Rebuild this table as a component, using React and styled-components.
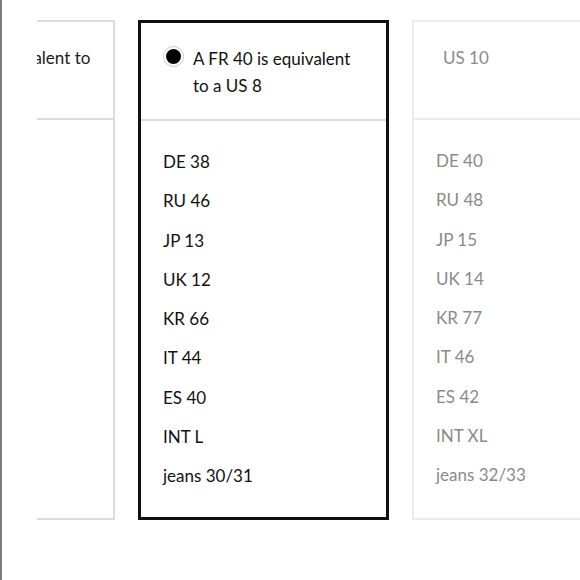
import React from 'react';
import styled, { createGlobalStyle, css } from 'styled-components';

const GlobalStyle = createGlobalStyle`
  html, body {
    margin: 0;
    padding: 0;
    background: #fff;
  }
  body {
    font-family: Lato, 'Open Sans', 'Liberation Sans', sans-serif;
    -webkit-font-smoothing: antialiased;
  }
`;

const Page = styled.div`
  display: flex;
  height: 580px;
  border-left: 2px solid #7c7c7c;
  box-sizing: border-box;
`;

const Viewport = styled.div`
  flex: 1;
  margin-left: 35px;
  padding-top: 20px;
  overflow: hidden;
`;

const Track = styled.div`
  display: flex;
  gap: 23px;
  margin-left: -173px;
`;

const Card = styled.div`
  flex-shrink: 0;
  width: 251px;
  height: 500px;
  box-sizing: border-box;
  display: flex;
  flex-direction: column;
  border: 2px solid ${(p) => (p.$dim ? '#ececec' : '#dcdcdc')};
  color: ${(p) => (p.$dim ? '#8a8a8a' : '#1a1a1a')};

  ${(p) =>
    p.$selected &&
    css`
      border: 3px solid #111;
      color: #111;
    `}
`;

const Header = styled.div`
  height: 98px;
  box-sizing: border-box;
  display: flex;
  align-items: flex-start;
  gap: 9px;
  padding: 22px 20px 0 ${(p) => p.$indent}px;
  border-bottom: 2px solid ${(p) => (p.$dim ? '#ececec' : '#dcdcdc')};
  font-size: 17px;
  line-height: 27px;
`;

const Radio = styled.span`
  flex-shrink: 0;
  width: 21px;
  height: 21px;
  margin-top: 1px;
  box-sizing: border-box;
  border: 1px solid #c8c8c8;
  border-radius: 50%;
  display: flex;
  align-items: center;
  justify-content: center;

  &::after {
    content: '';
    width: 15px;
    height: 15px;
    border-radius: 50%;
    background: #000;
  }
`;

const List = styled.ul`
  list-style: none;
  margin: 0;
  padding: 21px 0 0 ${(p) => p.$indent}px;
  font-size: 17px;
  line-height: 39.3px;
`;

const cards = [
  {
    label: 'A FR 38 is equivalent to a US 6',
    headIndent: 47,
    listIndent: 22,
    sizes: [],
  },
  {
    label: 'A FR 40 is equivalent to a US 8',
    selected: true,
    headIndent: 22,
    listIndent: 22,
    sizes: ['DE 38', 'RU 46', 'JP 13', 'UK 12', 'KR 66', 'IT 44', 'ES 40', 'INT L', 'jeans 30/31'],
  },
  {
    label: 'US 10',
    dim: true,
    headIndent: 29,
    listIndent: 22,
    sizes: ['DE 40', 'RU 48', 'JP 15', 'UK 14', 'KR 77', 'IT 46', 'ES 42', 'INT XL', 'jeans 32/33'],
  },
];

export default function App() {
  return (
    <>
      <GlobalStyle />
      <Page>
        <Viewport>
          <Track>
            {cards.map((c) => (
              <Card key={c.label} $selected={c.selected} $dim={c.dim}>
                <Header $indent={c.headIndent} $dim={c.dim}>
                  {c.selected && <Radio />}
                  <span>{c.label}</span>
                </Header>
                <List $indent={c.listIndent}>
                  {c.sizes.map((s) => (
                    <li key={s}>{s}</li>
                  ))}
                </List>
              </Card>
            ))}
          </Track>
        </Viewport>
      </Page>
    </>
  );
}
